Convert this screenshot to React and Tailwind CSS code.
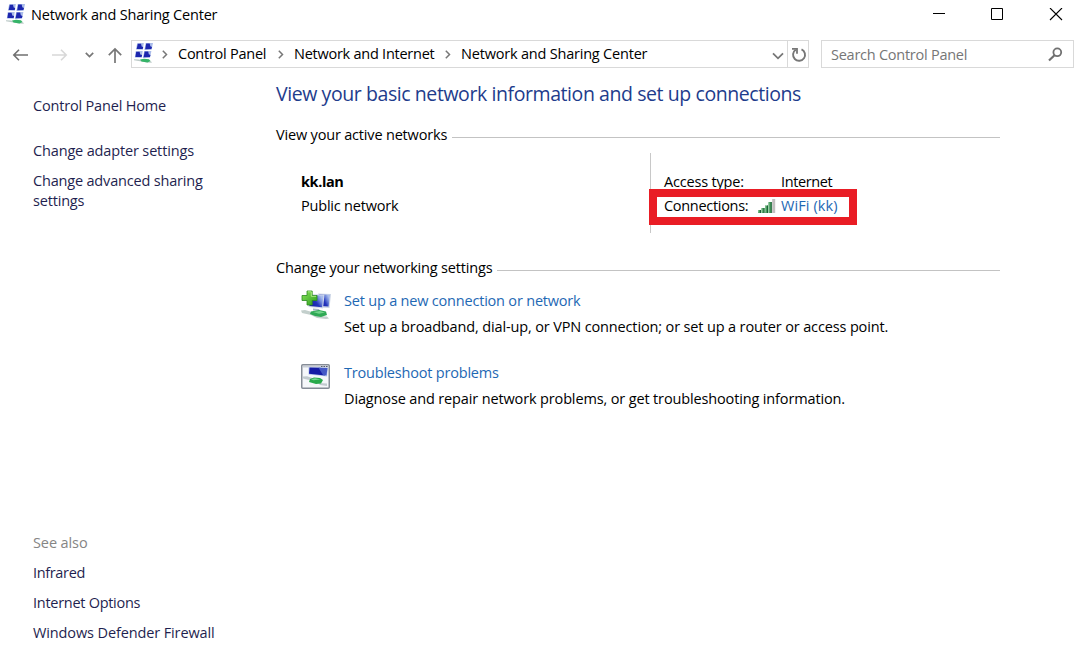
function NetworkIcon() {
  return (
    <svg width="20" height="22" viewBox="0 0 20 22" className="block shrink-0">
      <path d="M0 17.200l5 .4 5 1.400 7 .2 1 1.600-5-.2-7-1.300-6-1z" fill="#bccac8" />
      <path d="M6 17.600l4-.8 5 .4 1.500 1.800-3 1.400-6-.9z" fill="#35b468" />
      <path d="M3.200 1.300l6.600-.2-.9 6.600-7-.1z" fill="#a9bbe9" />
      <path d="M11.700 1.100l7.300-.2-1.400 6.800-7.200.2z" fill="#a9bbe9" />
      <path d="M1.700 9.200l7-.2-.9 6.800-7-.2z" fill="#a9bbe9" />
      <path d="M10.200 9.100l7.200-.2-1.400 6.900-7.200.1z" fill="#a9bbe9" />
      <path d="M3.800 1.800h3.200l.7 2.700 1.500.6-.5 2-6-.1z" fill="#1c26ae" />
      <path d="M12.200 1.600h3.500l.6 2.700 1.700.6-.6 2.200-6.200.1z" fill="#1c26ae" />
      <path d="M2.200 9.700h3.400l.7 2.700 1.800.6-.5 2-6.200-.1z" fill="#1c26ae" />
      <path d="M10.700 9.600h3.500l.6 2.700 1.700.6-.6 2.200-6.300.1z" fill="#1c26ae" />
    </svg>
  );
}

function Crumb() {
  return (
    <svg width="6" height="9" viewBox="0 0 6 9" className="block shrink-0">
      <path d="M.8.8l3.700 3.700L.8 8.200" fill="none" stroke="#777" strokeWidth="1.500" />
    </svg>
  );
}

function SignalIcon() {
  return (
    <svg width="19" height="16" viewBox="0 0 19 16" className="block shrink-0">
      <path d="M1 12h3v3H1z" fill="#4a9c60" />
      <path d="M4.500 10h3v5h-3z" fill="#4a9c60" />
      <path d="M8 7.500h3V15H8z" fill="#4a9c60" />
      <path d="M11.500 4h3.200v11h-3.200z" fill="#4a9c60" />
      <path d="M15.200 1h3v14h-3z" fill="#c2bfc0" />
      <path d="M3.500 12v3M7 10v5M10.500 7.500V15M14.200 4v11" stroke="#1c6238" strokeWidth="1" />
      <path d="M1.500 12v2.500M5 10.500v4M8.500 8v6.500M12 4.500v10" stroke="#85c594" strokeWidth=".8" />
    </svg>
  );
}

function NewConnectionIcon() {
  return (
    <svg width="32" height="32" viewBox="0 0 32 32" className="block shrink-0">
      <defs>
        <linearGradient id="screen" x1="0" y1="1" x2="1" y2=".4">
          <stop offset="0" stopColor="#0c149c" />
          <stop offset=".55" stopColor="#2434bc" />
          <stop offset=".8" stopColor="#7088da" />
          <stop offset="1" stopColor="#a9bcec" />
        </linearGradient>
        <linearGradient id="plus" x1="0" y1="0" x2="1" y2="1">
          <stop offset="0" stopColor="#8be35c" />
          <stop offset="1" stopColor="#2a9d1c" />
        </linearGradient>
      </defs>
      <path d="M17 4.500l13 .5-1.500 14-10-.5z" fill="#cbd5e5" />
      <path d="M18 5.300l11 .4-1.400 11.800-8-.4z" fill="url(#screen)" />
      <path d="M7 5l16.500.5-1.500 14-14.500-1.500z" fill="#d5dcea" />
      <path d="M8 6l14.500.4-1.300 11.800L8.500 17z" fill="url(#screen)" />
      <path d="M12 19.500l6 .5 1 2-7-.5z" fill="#aab6c8" />
      <path d="M0 21.500l4-.5 7 2 6 4 9 .5 2 2-3 .5-9-1-6-3-9-2z" fill="#c3cfcc" />
      <path d="M10 22.500l8-1.500 7 1.500 1 3.500-6 2-6-1-5-2z" fill="#2fa955" />
      <path d="M12 23l7-1 5 1.500-6 1.300z" fill="#74d48c" />
      <path d="M6 2h5.200v4.500H16v5h-4.800V16H6v-4.500H1v-5h5z" fill="url(#plus)" stroke="#2b8a20" strokeWidth=".8" />
      <path d="M6.800 2.800h3.500v4.500h4.800" fill="none" stroke="#b5f08b" strokeWidth=".9" />
    </svg>
  );
}

function TroubleshootIcon() {
  return (
    <svg width="29" height="25" viewBox="0 0 29 25" className="block shrink-0">
      <rect x=".75" y=".75" width="27.500" height="23.500" rx="1" fill="#f5f7fa" stroke="#858c96" strokeWidth="1.500" />
      <path d="M2 2h25v1.500H2z" fill="#c9ced6" />
      <path d="M20 2.500h1.500M22.500 2.500H24M25 2.500h1.500" stroke="#555c68" />
      <path d="M7.500 3.200l19.500.3-1 9-18.500-2z" fill="#b8c7eb" />
      <path d="M8.500 3.500l11 .2L24 11.500l-16-1.700z" fill="#151ca5" />
      <path d="M17.500 3.700l9 .2-1 7.500-3.500-.4z" fill="#4459c6" />
      <path d="M2 12.500l4-.3 6 2v2l-5-.5-5-1.200zM17 19l9 .5v2.500l-7-1z" fill="#c1cacf" />
      <path d="M9 15l4-1.500 6 .5 3 2-2 3.500-5 .5-7-2z" fill="#28aa4b" />
      <path d="M10 15.200l4-1 5.500 1.300-7 .8z" fill="#78d790" />
    </svg>
  );
}

function SectionTitle({ children }) {
  return (
    <div className="flex h-5 items-center gap-[5px]">
      <h3 className="whitespace-nowrap">{children}</h3>
      <span className="mt-[5px] h-px flex-1 bg-[#c3c3c3]" />
    </div>
  );
}

function Task({ icon, title, children }) {
  return (
    <li className="flex h-[72px]">
      <div className="flex w-[43px] shrink-0">{icon}</div>
      <div className="whitespace-nowrap">
        <a className="block tracking-[-0.2px] text-[#1e68b4]">{title}</a>
        <p className="mt-1.5 tracking-[-0.14px]">{children}</p>
      </div>
    </li>
  );
}

function TitleBar() {
  return (
    <header className="flex h-[30px] items-center pl-[6px]">
      <div className="-mt-0.5"><NetworkIcon /></div>
      <h1 className="ml-[5px] flex-1 tracking-[-0.2px]">Network and Sharing Center</h1>
      <svg width="14" height="14" viewBox="0 0 14 14" className="mr-[44px] block">
        <path d="M1 5.500h12" stroke="#000" />
      </svg>
      <svg width="14" height="14" viewBox="0 0 14 14" className="mr-[45px] block">
        <path d="M1.500.5h11v11h-11z" fill="none" stroke="#000" />
      </svg>
      <svg width="14" height="14" viewBox="0 0 14 14" className="mr-[17px] block">
        <path d="M1 0l12 12M13 0L1 12" stroke="#000" strokeWidth="1.100" />
      </svg>
    </header>
  );
}

function AddressBar() {
  return (
    <nav className="mt-[10px] flex h-7 items-center tracking-[-0.25px]">
      <svg width="131" height="28" viewBox="0 0 131 28" fill="none" className="block shrink-0">
        <path d="M28 15H14M19 9.800L13.800 15l5.200 5.200" stroke="#707070" strokeWidth="1.600" />
        <path d="M52 15h14M61 9.800l5.200 5.200-5.200 5.200" stroke="#d8d8d8" strokeWidth="1.600" />
        <path d="M85.800 12.800l3.700 3.700 3.700-3.700" stroke="#777" strokeWidth="1.700" />
        <path d="M115 23V9M108.800 15.200L115 9l6.200 6.200" stroke="#777" strokeWidth="1.700" />
      </svg>
      <div className="flex h-7 w-[678px] items-center border border-[#d9d9d9] pl-0.5">
        <div className="-mt-[3px]"><NetworkIcon /></div>
        <div className="ml-2 flex flex-1 items-center whitespace-nowrap">
          <Crumb />
          <span className="ml-[10px] w-[100px]">Control Panel</span>
          <Crumb />
          <span className="ml-[10px] w-[151px]">Network and Internet</span>
          <Crumb />
          <span className="ml-[10px] tracking-[-0.2px]">Network and Sharing Center</span>
        </div>
        <svg width="12" height="8" viewBox="0 0 12 8" fill="none" className="mt-[3px] mr-[3px] block">
          <path d="M1 1.300l5 5 5-5" stroke="#777" strokeWidth="1.800" />
        </svg>
        <div className="flex h-full w-[21px] items-center justify-center border-l border-[#d9d9d9]">
          <svg width="16" height="16" viewBox="0 0 16 16" fill="none" className="mt-0.5 ml-0.5 block">
            <path d="M10.500 2.300a6 6 0 1 1-5.800.5" stroke="#777" strokeWidth="1.900" />
            <path d="M1 1.900h5v4.800" stroke="#777" strokeWidth="1.800" />
          </svg>
        </div>
      </div>
      <div className="ml-3 flex h-7 w-[253px] items-center justify-between border border-[#d9d9d9] pt-px pr-[10px] pl-[9px] text-[#767676]">
        <span>Search Control Panel</span>
        <svg width="15" height="15" viewBox="0 0 15 15" fill="none" className="block">
          <circle cx="9.300" cy="5.300" r="3.900" stroke="#707070" strokeWidth="1.800" />
          <path d="M6.500 8.200L1 13.500" stroke="#707070" strokeWidth="2.200" />
        </svg>
      </div>
    </nav>
  );
}

function Sidebar() {
  return (
    <aside className="flex w-[243px] shrink-0 flex-col pt-7 tracking-[-0.18px] text-[#1f1f50]">
      <a>Control Panel Home</a>
      <a className="mt-[25px] tracking-[-0.15px]">Change adapter settings</a>
      <a className="mt-[10px] w-[190px]">Change advanced sharing settings</a>
      <div className="mt-auto mb-1 flex flex-col gap-[10px]">
        <h2 className="tracking-[-0.1px] text-[#858585]">See also</h2>
        <a className="tracking-[-0.35px]">Infrared</a>
        <a className="tracking-[-0.28px]">Internet Options</a>
        <a className="tracking-[-0.12px]">Windows Defender Firewall</a>
      </div>
    </aside>
  );
}

function ActiveNetwork() {
  return (
    <div className="mt-2 flex h-20 pl-[25px]">
      <div className="w-[349px] pt-[19px]">
        <b className="block tracking-[-0.4px]">kk.lan</b>
        <p className="mt-1 tracking-[-0.2px]">Public network</p>
      </div>
      <div className="relative flex-1 border-l border-[#c8c8c8] pt-[19px] pl-[13px]">
        <div className="flex">
          <span className="w-[117px]">Access type:</span>
          <span className="tracking-[-0.4px]">Internet</span>
        </div>
        <div className="mt-1 flex items-center">
          <span className="w-[93px] tracking-[-0.3px]">Connections:</span>
          <SignalIcon />
          <a className="ml-[5px] tracking-[0.1px] text-[#1e68b4]">WiFi (kk)</a>
        </div>
        <div className="absolute top-9 -left-0.5 h-9 w-[208px] border-8 border-[#e91d25]" />
      </div>
    </div>
  );
}

export default function App() {
  return (
    <div className="flex h-[647px] w-[1080px] flex-col overflow-hidden bg-white font-['Open_Sans',sans-serif] text-[14.5px] leading-5 tracking-[-0.18px] text-black">
      <TitleBar />
      <AddressBar />
      <div className="flex flex-1 pl-[33px]">
        <Sidebar />
        <main className="w-[724px] pt-[14px]">
          <h2 className="h-6 whitespace-nowrap text-[19.5px] leading-6 tracking-[-0.42px] text-[#1e3c8c]">
            View your basic network information and set up connections
          </h2>
          <section className="mt-[19px]">
            <SectionTitle>View your active networks</SectionTitle>
            <ActiveNetwork />
          </section>
          <section className="mt-[25px]">
            <SectionTitle>Change your networking settings</SectionTitle>
            <ul className="mt-[13px] pl-[25px]">
              <Task icon={<div className="-mt-0.5"><NewConnectionIcon /></div>} title="Set up a new connection or network">
                Set up a broadband, dial-up, or VPN connection; or set up a router or access point.
              </Task>
              <Task icon={<div className="mt-px"><TroubleshootIcon /></div>} title="Troubleshoot problems">
                Diagnose and repair network problems, or get troubleshooting information.
              </Task>
            </ul>
          </section>
        </main>
      </div>
    </div>
  );
}
